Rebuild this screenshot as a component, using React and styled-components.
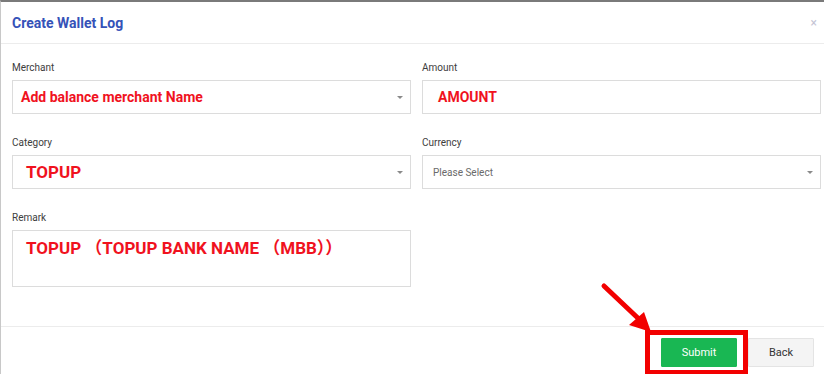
import React from 'react';
import styled, { createGlobalStyle } from 'styled-components';

const GlobalStyle = createGlobalStyle`
  html, body {
    margin: 0;
    padding: 0;
    background: #ffffff;
    font-family: Roboto, "Liberation Sans", Arial, sans-serif;
  }
`;

const Modal = styled.div`
  position: relative;
  width: 824px;
  height: 374px;
  box-sizing: border-box;
  border-top: 2px solid #7a7a7a;
  border-left: 1px solid #c8c8c8;
  overflow: hidden;
  display: flex;
  flex-direction: column;
`;

const Header = styled.div`
  height: 41px;
  flex: none;
  display: flex;
  align-items: center;
  justify-content: space-between;
  padding: 0 7px 0 11px;
  border-bottom: 1px solid #ececec;
`;

const Title = styled.h3`
  margin: 0;
  font-size: 14px;
  font-weight: 700;
  color: #3552b8;
`;

const Close = styled.span`
  font-size: 12px;
  color: #c4c4d4;
  line-height: 1;
`;

const Body = styled.div`
  flex: 1;
  padding: 17px 4px 0 11px;
  display: grid;
  grid-template-columns: 399px 399px;
  column-gap: 11px;
  align-content: start;
`;

const Group = styled.div`
  margin-bottom: 22px;
`;

const Label = styled.div`
  font-size: 10px;
  line-height: 13px;
  color: #3d3d3d;
  margin-bottom: 6px;
`;

const Field = styled.div`
  position: relative;
  box-sizing: border-box;
  height: ${(p) => p.h || 34}px;
  border: 1px solid #dcdcdc;
  background: #fff;
  padding: ${(p) => (p.top ? `${p.top}px` : '0')} 20px 0 ${(p) => p.pl || 10}px;
  display: flex;
  align-items: ${(p) => (p.top ? 'flex-start' : 'center')};
`;

const RedText = styled.span`
  font-family: Roboto, "Noto Sans CJK SC", sans-serif;
  font-size: ${(p) => p.size || 14}px;
  line-height: 1.2;
  font-weight: 700;
  color: #f0121e;
  white-space: pre;
`;

const Placeholder = styled.span`
  font-size: 10px;
  color: #6a6a6a;
`;

const Caret = styled.span`
  position: absolute;
  right: 7px;
  top: 50%;
  margin-top: -1px;
  width: 0;
  height: 0;
  border-left: 3px solid transparent;
  border-right: 3px solid transparent;
  border-top: 3px solid #8a8a8a;
`;

const Footer = styled.div`
  box-sizing: border-box;
  height: 48px;
  flex: none;
  border-top: 1px solid #ececec;
  display: flex;
  justify-content: flex-end;
  align-items: flex-start;
  padding: 3px 10px 0 0;
`;

const Highlight = styled.div`
  border: 5px solid #f20000;
  padding: 3px 6px 3px 11px;
  display: flex;
`;

const Button = styled.button`
  font-family: Roboto, "Liberation Sans", Arial, sans-serif;
  font-size: 11px;
  height: 29px;
  width: ${(p) => p.w}px;
  border: 1px solid ${(p) => (p.primary ? '#19b753' : '#e4e4e4')};
  background: ${(p) => (p.primary ? '#19b753' : '#f4f4f4')};
  color: ${(p) => (p.primary ? '#ffffff' : '#333333')};
  padding: 0;
  border-radius: 1px;
`;

const BackWrap = styled.div`
  padding-top: 8px;
`;

const Arrow = styled.svg`
  position: absolute;
  left: 596px;
  top: 278px;
`;

export default function App() {
  return (
    <>
      <GlobalStyle />
      <Modal>
        <Header>
          <Title>Create Wallet Log</Title>
          <Close>×</Close>
        </Header>
        <Body>
          <Group>
            <Label>Merchant</Label>
            <Field pl={8}>
              <RedText>Add balance merchant Name</RedText>
              <Caret />
            </Field>
          </Group>
          <Group>
            <Label>Amount</Label>
            <Field pl={15}>
              <RedText>AMOUNT</RedText>
            </Field>
          </Group>
          <Group>
            <Label>Category</Label>
            <Field pl={13}>
              <RedText size={17}>TOPUP</RedText>
              <Caret />
            </Field>
          </Group>
          <Group>
            <Label>Currency</Label>
            <Field pl={10}>
              <Placeholder>Please Select</Placeholder>
              <Caret />
            </Field>
          </Group>
          <Group>
            <Label>Remark</Label>
            <Field pl={13} h={57} top={7}>
              <RedText size={17}>TOPUP （TOPUP BANK NAME （MBB））</RedText>
            </Field>
          </Group>
        </Body>
        <Footer>
          <Highlight>
            <Button primary w={76}>Submit</Button>
          </Highlight>
          <BackWrap>
            <Button w={66}>Back</Button>
          </BackWrap>
        </Footer>
        <Arrow width="60" height="58" viewBox="0 0 60 58">
          <line x1="7" y1="6" x2="44" y2="41" stroke="#f20000" strokeWidth="5" strokeLinecap="round" />
          <polygon points="54,52 32,45 47,32" fill="#f20000" />
        </Arrow>
      </Modal>
    </>
  );
}
